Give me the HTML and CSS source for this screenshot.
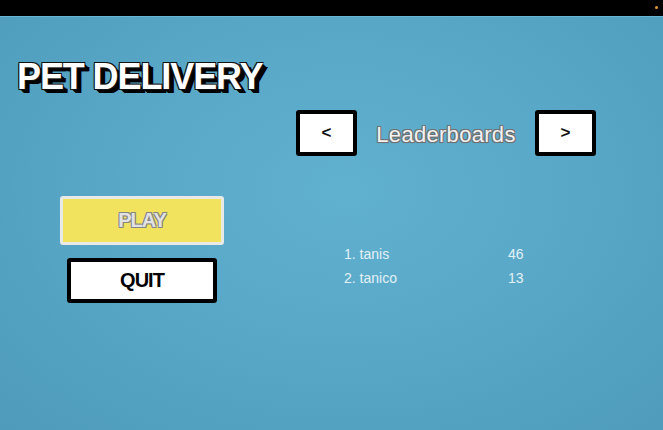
FILE: index.html
```html
<!DOCTYPE html>
<html lang="en">

<head>
    <meta charset="UTF-8">
    <meta name="viewport" content="width=device-width, initial-scale=1.0">
    <title>Pet Delivery</title>
    <link rel="stylesheet" href="styles.css">
</head>

<body>

    <div class="topbar">
        <span class="led"></span>
    </div>

    <main class="screen">

        <!-- Title and main menu -->
        <section class="menu">
            <h1 class="title">PET DELIVERY</h1>

            <div class="buttons">
                <button class="btn play">PLAY</button>
                <button class="btn quit">QUIT</button>
            </div>
        </section>

        <!-- Leaderboard panel -->
        <section class="board">
            <div class="board-head">
                <button class="arrow">&lt;</button>
                <span class="board-title">Leaderboards</span>
                <button class="arrow">&gt;</button>
            </div>

            <ul class="scores">
                <li><span>1. tanis</span><span>46</span></li>
                <li><span>2. tanico</span><span>13</span></li>
            </ul>
        </section>

    </main>

</body>

</html>
```

FILE: styles.css
```css
* {
    box-sizing: border-box;
}

html,
body {
    height: 100%;
}

body {
    font-family: "Liberation Sans", Arial, sans-serif;
    margin: 0;
    padding: 0;
    background-color: #000;
    display: flex;
    flex-direction: column;
}

.topbar {
    height: 16px;
    background-color: #000;
    display: flex;
    justify-content: flex-end;
    align-items: center;
    padding-right: 5px;
}

.led {
    width: 3px;
    height: 3px;
    border-radius: 50%;
    background-color: #e39a2a;
    margin-top: -1px;
}

.screen {
    flex: 1;
    display: flex;
    border-top: 1px solid #66b6d4;
    background: radial-gradient(ellipse at 52% 42%, #60b0cf 0%, #59a8c8 45%, #4e9bbb 100%);
}

/* Left side */
.menu {
    width: 296px;
    flex-shrink: 0;
}

.title {
    margin: 42px 0 0 17px;
    font-size: 36px;
    line-height: 36px;
    font-weight: bold;
    letter-spacing: -1.1px;
    color: #fff;
    text-shadow:
        -1px -1px 0 #111,
        1px -1px 0 #111,
        -1px 1px 0 #111,
        1px 1px 0 #111,
        2px 2px 0 #000,
        3px 3px 0 #000,
        4px 4px 0 #000,
        5px 4px 0 #000;
}

.buttons {
    margin: 101px 0 0 60px;
    width: 164px;
    display: flex;
    flex-direction: column;
    align-items: center;
    gap: 13px;
}

.btn {
    font-family: "Liberation Sans", Arial, sans-serif;
    font-size: 20px;
    font-weight: bold;
    letter-spacing: -1px;
    border-radius: 3px;
    padding: 0;
    cursor: pointer;
}

.play {
    width: 164px;
    height: 49px;
    background-color: #f2e35e;
    border: 3px solid #e9e9e6;
    color: #e2e2e2;
    text-shadow:
        -1px -1px 0 #858585,
        1px -1px 0 #858585,
        -1px 1px 0 #858585,
        1px 1px 0 #858585;
}

.quit {
    width: 150px;
    height: 45px;
    background-color: #fff;
    border: 4px solid #000;
    color: #000;
}

/* Right side */
.board {
    flex: 1;
}

.board-head {
    margin-top: 93px;
    width: 300px;
    display: flex;
    justify-content: space-between;
    align-items: center;
}

.arrow {
    width: 61px;
    height: 46px;
    background-color: #fff;
    border: 4px solid #000;
    border-radius: 3px;
    font-family: "Liberation Sans", Arial, sans-serif;
    font-size: 17px;
    font-weight: bold;
    color: #111;
    padding: 0;
    cursor: pointer;
}

.board-title {
    margin: 4px 0 0 0;
    font-size: 22px;
    letter-spacing: 0.3px;
    color: #f2f2f2;
    text-shadow:
        -1px -1px 0 #707070,
        1px -1px 0 #707070,
        -1px 1px 0 #707070,
        1px 1px 0 #707070,
        0 1px 1px #707070;
}

.scores {
    list-style: none;
    margin: 86px 0 0 48px;
    padding: 0;
    font-size: 14px;
    line-height: 24px;
    color: #e4f1f6;
}

.scores li {
    display: grid;
    grid-template-columns: 164px auto;
}
```
